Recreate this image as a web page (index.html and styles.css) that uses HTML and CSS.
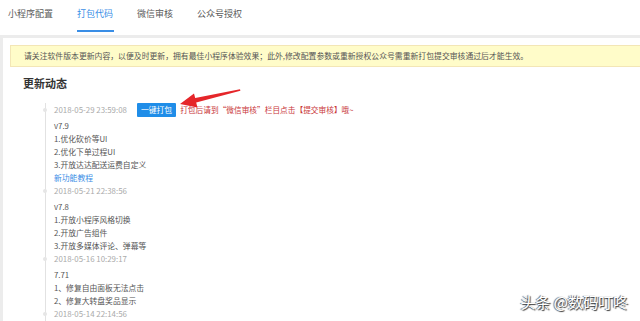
FILE: index.html
```html
<!DOCTYPE html>
<html lang="zh">
<head>
<meta charset="utf-8">
<link rel="stylesheet" href="styles.css">
</head>
<body>
<div class="tabs">
  <div class="tab">小程序配置</div>
  <div class="tab active">打包代码</div>
  <div class="tab">微信审核</div>
  <div class="tab">公众号授权</div>
</div>
<div class="page">
  <div class="panel">
    <div class="notice">请关注软件版本更新内容，以便及时更新，拥有最佳小程序体验效果；此外,修改配置参数或重新授权公众号需重新打包提交审核通过后才能生效。</div>
    <h2 class="title">更新动态</h2>
    <div class="timeline">
      <div class="item">
        <div class="head"><span class="date">2018-05-29 23:59:08</span><span class="btn">一键打包</span><span class="tip">打包后请到“微信审核”栏目点击【提交审核】哦~</span></div>
        <div class="body">
          <div>v7.9</div>
          <div>1.优化砍价等UI</div>
          <div>2.优化下单过程UI</div>
          <div>3.开放达达配送运费自定义</div>
          <div class="link">新功能教程</div>
        </div>
      </div>
      <div class="item">
        <div class="head"><span class="date">2018-05-21 22:38:56</span></div>
        <div class="body">
          <div>v7.8</div>
          <div>1.开放小程序风格切换</div>
          <div>2.开放广告组件</div>
          <div>3.开放多媒体评论、弹幕等</div>
        </div>
      </div>
      <div class="item">
        <div class="head"><span class="date">2018-05-16 10:29:17</span></div>
        <div class="body">
          <div>7.71</div>
          <div>1、修复自由面板无法点击</div>
          <div>2、修复大转盘奖品显示</div>
        </div>
      </div>
      <div class="item">
        <div class="head"><span class="date">2018-05-14 22:14:56</span></div>
      </div>
    </div>
  </div>
</div>
<svg class="arrow" width="640" height="321" viewBox="0 0 640 321">
  <polygon points="180,104 194,93.4 195.2,98 240,89.2 240.4,90.8 196.2,102.6 197.4,107.4" fill="#e5262a"/>
</svg>
<div class="watermark">头条 @数码叮咚</div>
</body>
</html>
```
FILE: styles.css
```css
html, body {
  margin: 0;
  padding: 0;
  width: 640px;
  height: 321px;
  overflow: hidden;
  background: #ececec;
  font-family: "Noto Sans CJK SC", "Noto Sans", sans-serif;
}
.tabs {
  display: flex;
  height: 35px;
  background: #fff;
  padding-left: 8px;
  gap: 24px;
}
.tab {
  font-size: 9px;
  color: #5a5a5a;
  line-height: 27px;
  height: 35px;
  box-sizing: border-box;
}
.tab.active {
  color: #3a8ee6;
  position: relative;
}
.tab.active::after {
  content: "";
  position: absolute;
  left: 0;
  right: -1px;
  top: 30px;
  height: 2px;
  background: #3a8ee6;
}
.page {
  padding: 3px 0 0 3px;
}
.panel {
  background: #fff;
  height: 290px;
  padding: 7px 0 0 7px;
}
.notice {
  width: 640px;
  height: 22px;
  box-sizing: border-box;
  background: #fffcc9;
  border: 1px solid #f3e6b6;
  font-size: 7.85px;
  line-height: 20px;
  color: #555;
  padding-left: 13px;
  white-space: nowrap;
}
.title {
  margin: 8px 0 0 13px;
  font-size: 11px;
  line-height: 16px;
  font-weight: bold;
  color: #333;
}
.timeline {
  margin: 12px 0 0 35px;
  border-left: 1px solid #e2e2e2;
  padding-left: 8px;
}
.item .head {
  height: 14px;
  line-height: 14px;
  font-size: 7.9px;
  display: flex;
  align-items: center;
  position: relative;
  white-space: nowrap;
}
.item .head::before {
  content: "";
  position: absolute;
  left: -11px;
  top: 5px;
  width: 4px;
  height: 4px;
  border-radius: 50%;
  background: #e6e6e6;
}
.date {
  color: #aaa;
}
.btn {
  margin-left: 10px;
  background: #1f8de8;
  color: #fff;
  font-size: 7.8px;
  line-height: 14px;
  padding: 0 4px;
  border-radius: 1px;
}
.tip {
  margin-left: 4px;
  color: #c9373a;
  font-size: 7.7px;
}
.body {
  padding-top: 2px;
  font-size: 7.8px;
  line-height: 13px;
  color: #555;
}
.link {
  color: #3a8ee6;
}
.arrow {
  position: absolute;
  left: 0;
  top: 0;
  pointer-events: none;
}
.watermark {
  position: absolute;
  right: 12px;
  top: 293px;
  font-size: 15px;
  line-height: 18px;
  color: #fff;
  text-shadow: 1px 1px 1px #333, -1px 0 1px #555;
  font-family: "Noto Sans CJK SC", sans-serif;
}
```
